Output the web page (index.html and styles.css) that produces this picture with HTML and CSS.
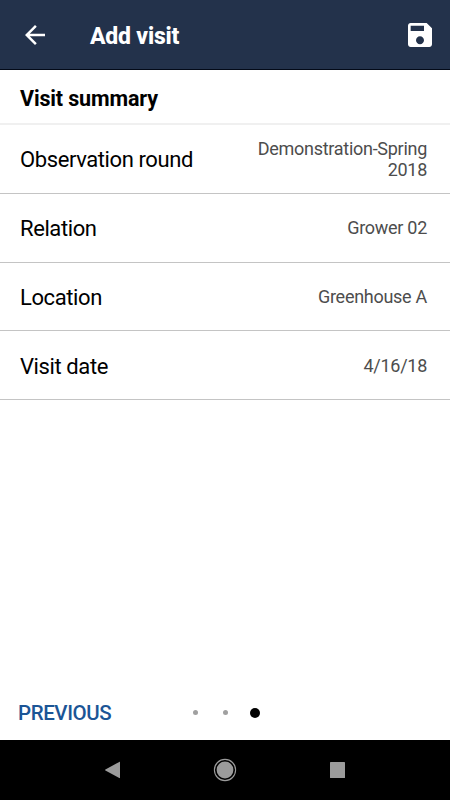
FILE: index.html
```
<!DOCTYPE html>
<html lang="en">
<head>
  <meta charset="UTF-8" />
  <meta name="viewport" content="width=device-width, initial-scale=1.0" />
  <title>Add visit</title>
  <link rel="stylesheet" href="styles.css">
</head>
<body>
  <header class="toolbar">
    <button class="icon-button" aria-label="Back">
      <svg width="30" height="30" viewBox="0 0 24 24"><path d="M20 11H7.83l5.59-5.59L12 4l-8 8 8 8 1.41-1.41L7.83 13H20v-2z"/></svg>
    </button>
    <h1>Add visit</h1>
    <button class="icon-button" aria-label="Save">
      <svg width="32" height="32" viewBox="0 0 24 24"><path d="M17 3H5c-1.11 0-2 .9-2 2v14c0 1.1.89 2 2 2h14c1.1 0 2-.9 2-2V7l-4-4zm-5 16c-1.66 0-3-1.34-3-3s1.34-3 3-3 3 1.34 3 3-1.34 3-3 3zm3-10H5V5h10v4z"/></svg>
    </button>
  </header>

  <main class="content">
    <h2>Visit summary</h2>
    <dl class="summary">
      <div class="row"><dt>Observation round</dt><dd>Demonstration-Spring 2018</dd></div>
      <div class="row"><dt>Relation</dt><dd>Grower 02</dd></div>
      <div class="row"><dt>Location</dt><dd>Greenhouse A</dd></div>
      <div class="row"><dt>Visit date</dt><dd>4/16/18</dd></div>
    </dl>
  </main>

  <footer class="steps">
    <button class="previous">PREVIOUS</button>
    <div class="dots">
      <span class="dot"></span>
      <span class="dot"></span>
      <span class="dot active"></span>
    </div>
  </footer>

  <nav class="system-nav">
    <svg width="18" height="18" viewBox="0 0 18 18"><path d="M16 1.2v15.6c0 .3-.4.4-.7.3L1.4 9.6c-.5-.3-.5-.8 0-1.1L15.3.9c.3-.2.7 0 .7.3z"/></svg>
    <svg width="24" height="24" viewBox="0 0 24 24"><circle class="ring" cx="12" cy="12" r="10.6"/><circle cx="12" cy="12" r="8.4"/></svg>
    <svg width="18" height="18" viewBox="0 0 18 18"><rect x="1" y="1" width="15" height="16" rx=".6"/></svg>
  </nav>
</body>
</html>
```
FILE: styles.css
```
* {
  box-sizing: border-box;
}
body {
  margin: 0;
  height: 100vh;
  display: flex;
  flex-direction: column;
  font-family: Roboto, sans-serif;
  background: #fff;
  color: #000;
}
button {
  padding: 0;
  border: none;
  background: none;
  font-family: inherit;
}
svg {
  display: block;
}
.toolbar {
  display: flex;
  align-items: center;
  height: 70px;
  padding: 1px 14px 0 20px;
  background: #23324b;
  border-bottom: 1px solid #030a18;
  color: #fff;
}
.icon-button svg {
  fill: #fff;
}
.toolbar h1 {
  flex: 1;
  margin: 0 0 0 40px;
  padding-top: 2px;
  font-size: 23px;
  font-weight: 800;
  letter-spacing: -0.2px;
}
.content {
  flex: 1;
}
.content h2 {
  height: 55px;
  margin: 0;
  padding-left: 20px;
  border-bottom: 2px solid #f0f0f0;
  font-size: 21.5px;
  font-weight: 700;
  letter-spacing: -0.15px;
  line-height: 58px;
}
.summary {
  margin: 0;
}
.row {
  display: flex;
  align-items: center;
  justify-content: space-between;
  height: 68.75px;
  padding: 2px 23px 0 20px;
  border-bottom: 1px solid #c4c4c4;
}
.row dt {
  font-size: 22px;
  letter-spacing: -0.4px;
}
.row dd {
  width: 180px;
  margin: 0;
  color: #4d4d4d;
  font-size: 18px;
  letter-spacing: -0.28px;
  line-height: 20.5px;
  text-align: right;
}
.steps {
  display: grid;
  grid-template-columns: 1fr auto 1fr;
  align-items: center;
  height: 55px;
  padding: 0 18px;
}
.previous {
  justify-self: start;
  padding-top: 1px;
  color: #1b5596;
  font-size: 20.5px;
  font-weight: 500;
  letter-spacing: -0.4px;
}
.dots {
  display: flex;
  align-items: center;
}
.dot {
  width: 5px;
  height: 5px;
  margin: 0 12.5px;
  border-radius: 50%;
  background: #a0a0a0;
}
.dot.active {
  width: 10px;
  height: 10px;
  margin: 0 10px;
  background: #000;
}
.system-nav {
  display: grid;
  grid-template-columns: repeat(3, 112.5px);
  align-items: center;
  justify-content: center;
  justify-items: center;
  height: 60px;
  background: #000;
}
.system-nav svg {
  fill: #9b9b9b;
}
.system-nav .ring {
  fill: none;
  stroke: #9b9b9b;
  stroke-width: 1.1;
}
```
